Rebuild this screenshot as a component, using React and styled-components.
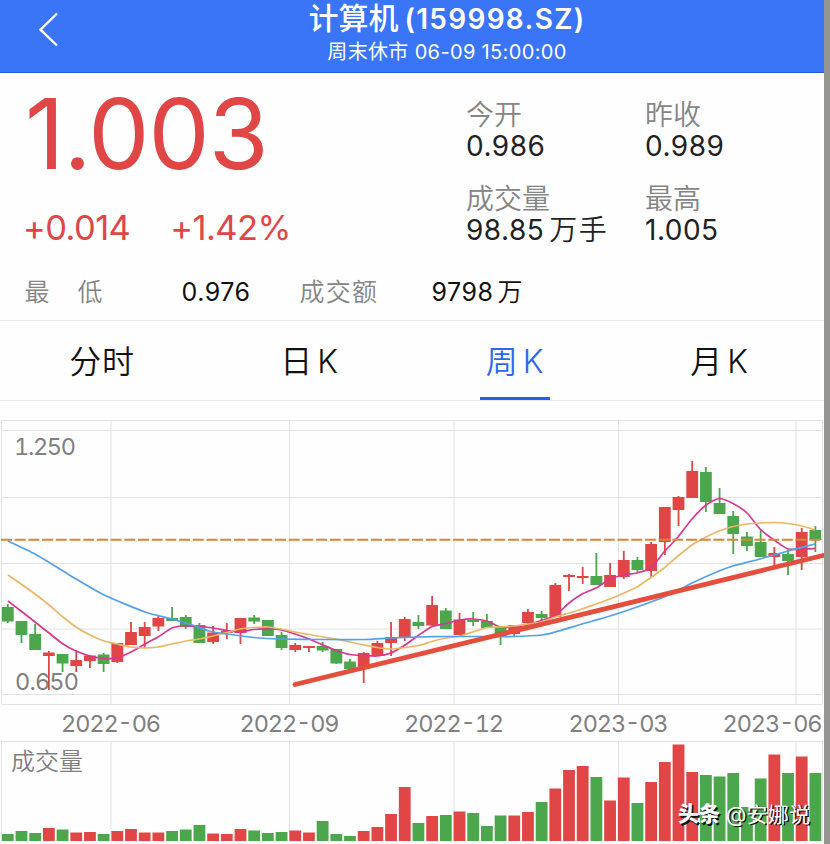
import React from 'react';
import styled, { createGlobalStyle } from 'styled-components';

const GlobalStyle = createGlobalStyle`
  * {
    box-sizing: border-box;
  }

  body {
    margin: 0;
    background: #959591;
    font-family: Inter, 'Noto Sans CJK SC', sans-serif;
    overflow: hidden;
  }
`;

const Screen = styled.div`
  width: 824px;
  height: 844px;
  background: #fefefe;
  overflow: hidden;
  white-space: nowrap;
`;

const Header = styled.header`
  display: grid;
  grid-template-columns: 70px 1fr;
  height: 73px;
  background: #3a74f7;
  border-bottom: 1px solid #2457d8;
  color: #fff;
`;

const BackButton = styled.button`
  display: flex;
  align-items: flex-start;
  padding: 12px 0 0 38px;
  border: none;
  background: none;
`;

const Titles = styled.div`
  display: flex;
  flex-direction: column;
  align-items: center;
  padding-top: 1px;
`;

const Title = styled.h1`
  display: flex;
  gap: 6px;
  margin: 0;
  height: 37px;
  font-size: 28px;
  line-height: 36px;
  font-weight: 600;
  letter-spacing: 1.3px;
`;

const TitleName = styled.span`
  font-size: 30px;
  font-weight: 500;
  line-height: 34px;
  letter-spacing: 0;
`;

const Subtitle = styled.div`
  font-size: 20px;
  line-height: 29px;
  letter-spacing: 0.35px;
`;

const Quote = styled.section`
  display: grid;
  grid-template-columns: 466px 179px 179px;
  grid-template-rows: 191px 57px;
  height: 248px;
  border-bottom: 1px solid #e9e9e9;
`;

const PriceBlock = styled.div`
  padding: 11px 0 0 25px;
  color: #e04646;
`;

const Price = styled.div`
  font-size: 97px;
  line-height: 100px;
  height: 122px;
  letter-spacing: -0.9px;
`;

const Changes = styled.div`
  display: flex;
  gap: 40px;
  margin-left: -2px;
  font-size: 34.5px;
  line-height: 44px;
  font-weight: 400;
  letter-spacing: -0.6px;
`;

const StatColumn = styled.div`
  display: flex;
  flex-direction: column;
  gap: 22px;
  padding-top: 27px;
`;

const Stat = styled.div`
  display: flex;
  flex-direction: column;
  line-height: 31px;
  font-size: 28px;
`;

const StatLabel = styled.span`
  height: 31px;
  color: #858585;
  font-weight: 350;
`;

const StatValue = styled.span`
  height: 31px;
  display: flex;
  gap: 5px;
  color: #222;
  letter-spacing: 0.5px;
`;

const Unit = styled.span`
  font-weight: 350;
  letter-spacing: 1.5px;
`;

const ExtraRow = styled.div`
  grid-column: 1 / -1;
  display: grid;
  grid-template-columns: 157px 118px 132px 1fr;
  padding-left: 24.5px;
  font-size: 25px;
  line-height: 56px;
`;

const ExtraLabel = styled.span`
  color: #858585;
  font-weight: 350;
  word-spacing: ${({ $wide }) => ($wide ? '21px' : '0')};
  letter-spacing: ${({ $wide }) => ($wide ? '0' : '1.2px')};
`;

const ExtraValue = styled.span`
  display: flex;
  gap: 4px;
  color: #111;
  letter-spacing: 0.5px;
`;

const Tabs = styled.nav`
  display: grid;
  grid-template-columns: 204px 211px 200px 209px;
  height: 80px;
  border-bottom: 1px solid #e9e9e9;
`;

const Tab = styled.button`
  display: flex;
  justify-content: center;
  padding: 0;
  border: none;
  background: none;
`;

const TabLabel = styled.span`
  display: flex;
  justify-content: center;
  gap: 4px;
  width: 70px;
  height: 79px;
  border-bottom: 3px solid ${({ $active }) => ($active ? '#1d63e6' : 'transparent')};
  color: ${({ $active }) => ($active ? '#2c69ee' : '#111')};
  font-family: Inter, 'Noto Sans CJK SC', sans-serif;
  font-size: 32px;
  font-weight: 350;
  line-height: 82px;
  letter-spacing: 0.8px;
`;

const Chart = styled.svg`
  display: block;
  font-family: Inter, 'Noto Sans CJK SC', sans-serif;
`;

const AxisLabels = styled.g`
  fill: #808080;
  font-size: 23.5px;
  font-variant-numeric: tabular-nums;
`;

const PaneTitle = styled.text`
  font-size: 24px;
  font-weight: 350;
`;

const RED = '#e04646';
const GREEN = '#4ca64b';
const CHART_TOP = 401;
const STEP = 13.688;
const FIRST_X = 7.8;
const BAR_WIDTH = 11.8;
const VOLUME_BASE = 841;

// [direction, body top, body bottom, wick top, wick bottom, volume top]
const candles = [
  ['g', 607, 621.5, 604, 623, 834],
  ['g', 621, 635, 621, 643, 831],
  ['g', 634, 650, 624, 650, 833],
  ['r', 652.5, 656, 651, 690, 828],
  ['g', 654, 663.5, 654, 672, 829.5],
  ['r', 660, 666, 650, 672, 832.5],
  ['r', 655.5, 661, 655, 668, 832],
  ['g', 654.5, 664, 653, 672, 834],
  ['r', 643, 662, 643, 663, 831],
  ['r', 632, 645, 622, 645, 829],
  ['r', 627, 636, 622, 648, 832.5],
  ['r', 618, 626.5, 616, 631, 832.5],
  ['g', 618, 621, 607, 621, 831],
  ['g', 617, 627, 615, 629, 829.5],
  ['g', 625, 643, 623, 643, 825],
  ['r', 632.5, 642, 626, 644, 833.5],
  ['r', 631, 633, 623, 639, 834],
  ['r', 618, 633, 618, 644, 829],
  ['g', 617.5, 621.5, 615, 624, 830.5],
  ['g', 620, 636, 620, 636, 833],
  ['g', 635, 648, 632, 650, 832],
  ['r', 645, 650, 643, 652, 830.5],
  ['r', 646, 648, 646, 652, 832.5],
  ['g', 646, 650.5, 642, 652, 821],
  ['g', 649, 663.5, 649, 664, 834],
  ['g', 661.5, 669, 659, 669, 836],
  ['r', 653, 669, 652, 683, 831],
  ['r', 643, 656, 641, 656, 827],
  ['r', 637, 643, 622, 656, 814],
  ['r', 619, 637, 617, 641, 787],
  ['g', 622, 626, 615, 629, 823],
  ['r', 605, 625.5, 596, 625.5, 816],
  ['g', 610.5, 629, 608, 629, 815],
  ['r', 619.5, 635, 613, 635, 811.5],
  ['g', 620, 622, 612, 626, 813],
  ['g', 621, 628, 614, 628, 826],
  ['g', 627, 636, 626, 645, 815.5],
  ['r', 625, 634, 625, 636, 815.5],
  ['r', 612, 623, 609, 625, 812],
  ['g', 614, 618, 611, 621, 802],
  ['r', 585, 617, 583, 617, 788.5],
  ['r', 575, 577, 574, 591, 770],
  ['r', 576, 578, 567, 584, 766],
  ['g', 576, 585, 553, 585, 777],
  ['r', 575, 587, 563, 587, 800.5],
  ['r', 560, 577, 551, 579, 777.5],
  ['g', 560, 570, 557, 572, 803],
  ['r', 544, 571, 542, 577, 782],
  ['r', 507, 542, 507, 555, 762],
  ['r', 497, 510, 496, 526, 744.5],
  ['r', 471, 498, 461, 498, 772],
  ['g', 472, 502, 467, 512, 775],
  ['g', 503, 514, 488, 514, 776.5],
  ['g', 516, 534, 511, 554, 773],
  ['g', 536.5, 546, 532, 551, 807],
  ['g', 542, 557, 530, 557, 778.5],
  ['r', 553, 557, 547, 566, 754.5],
  ['g', 554, 561, 550, 575, 773],
  ['r', 532, 557, 528, 570, 756.5],
  ['g', 530, 540, 526, 552, 773],
];

const averages = [
  {
    color: '#d9378f',
    points: [
      [8, 601], [21, 611], [35, 622], [49, 633], [63, 644], [76, 651], [90, 656], [104, 658.5],
      [117, 658], [131, 652], [145, 644], [158, 637], [172, 628], [183, 626], [199, 626.5],
      [213, 628], [227, 630.5], [240, 632], [254, 629.5], [268, 629], [281, 630], [295, 634],
      [309, 639], [323, 645], [336, 650.5], [350, 654.5], [364, 655.5], [377, 656], [391, 653],
      [405, 645], [419, 635], [432, 626.5], [446, 623.5], [460, 620], [473, 619], [487, 621],
      [500, 627], [514, 627], [528, 625], [542, 620], [555, 616], [569, 603], [582, 594],
      [596, 588], [610, 579], [624, 575], [637, 573], [651, 568], [664, 552], [678, 537],
      [692, 519], [706, 505], [719, 498.5], [733, 503.5], [747, 513], [760, 529], [774, 540],
      [788, 549], [802, 549], [815, 548.5],
    ],
  },
  {
    color: '#edb766',
    points: [
      [8, 575], [21, 584], [35, 594], [49, 605], [63, 617], [76, 627], [90, 635], [104, 641],
      [117, 644], [131, 647], [145, 648], [158, 647], [172, 644], [186, 641], [199, 639],
      [213, 636], [227, 632.5], [240, 629], [254, 627.5], [268, 627], [281, 629], [295, 632],
      [309, 634.5], [323, 637], [336, 639], [350, 642], [364, 645], [377, 647.5], [391, 649],
      [405, 647.5], [419, 645.5], [432, 641.5], [446, 638], [460, 636], [473, 632], [487, 627.5],
      [500, 627], [514, 626], [528, 624], [542, 622], [555, 617], [569, 613], [582, 609],
      [596, 604], [610, 599], [624, 593], [637, 587], [651, 577.5], [664, 568], [678, 556],
      [692, 545], [706, 537], [719, 531], [733, 526.5], [747, 524], [760, 523], [774, 522.5],
      [788, 523.5], [802, 526], [815, 530],
    ],
  },
  {
    color: '#51a1ec',
    points: [
      [8, 541], [35, 554], [63, 571], [76, 579], [104, 595], [145, 612], [172, 619],
      [192, 625], [209, 631], [227, 634], [254, 637.5], [281, 639], [323, 639.5], [364, 639.5],
      [391, 638], [419, 637], [446, 636.5], [487, 636.5], [514, 636.5], [542, 635], [555, 632],
      [582, 624], [610, 616], [637, 607], [664, 597], [678, 590.5], [692, 583], [719, 571],
      [733, 566], [760, 559], [788, 551], [815, 544],
    ],
  },
];

const months = [
  { x: 111, label: '2022-06' },
  { x: 289.5, label: '2022-09' },
  { x: 454, label: '2022-12' },
  { x: 618.5, label: '2023-03' },
  { x: 796, label: '2023-06', labelX: 772.5 },
];

const smoothPath = points =>
  points
    .map(([x, y], i) => {
      if (i === 0) return `M${x} ${y}`;
      const before = points[i - 2] || points[i - 1];
      const [px, py] = points[i - 1];
      const after = points[i + 1] || points[i];
      const c1 = [px + (x - before[0]) / 9, py + (y - before[1]) / 9];
      const c2 = [x - (after[0] - px) / 9, y - (after[1] - py) / 9];
      return `C${c1.join(' ')} ${c2.join(' ')} ${x} ${y}`;
    })
    .join('');

function Candle({ data, index }) {
  const [direction, top, bottom, high, low] = data;
  const x = FIRST_X + STEP * index;
  const color = direction === 'r' ? RED : GREEN;

  return (
    <g fill={color}>
      <rect x={x - 0.9} y={high} width="1.8" height={low - high} />
      <rect x={x - BAR_WIDTH / 2} y={top} width={BAR_WIDTH} height={bottom - top} />
    </g>
  );
}

function KLineChart() {
  return (
    <Chart width="824" height="443" viewBox={`0 ${CHART_TOP} 824 443`}>
      <g stroke="#e2e2e2" strokeWidth="1" fill="none">
        <path d="M1.5 704.5V420.5H822.5V704.5Z" />
        {[430.5, 497.5, 563.5, 629, 694.5].map(y => (
          <path key={y} d={`M1 ${y}H823`} />
        ))}
        <path d="M1.5 841V741.5H822.5V841" />
        {months.map(({ x }) => (
          <path key={x} d={`M${x} 421V704M${x} 742V841`} />
        ))}
      </g>

      {candles.map((data, i) => (
        <Candle key={i} data={data} index={i} />
      ))}

      {averages.map(({ color, points }) => (
        <path key={color} d={smoothPath(points)} fill="none" stroke={color} strokeWidth="1.7" />
      ))}
      <path d="M1 539.8H823" stroke="#da8436" strokeWidth="2" strokeDasharray="11 2.7" />
      <path d="M295 684.5L823 555.5" stroke="#e54e3c" strokeWidth="4.8" strokeLinecap="round" />

      <AxisLabels>
        <text x="14" y="454.5" textLength="62">1.250</text>
        <text x="15" y="689.5" textLength="64">0.650</text>
        {months.map(({ x, label, labelX }) => (
          <text key={label} x={(labelX || x) - 50} y="731.5" textLength="100">{label}</text>
        ))}
        <PaneTitle x="11" y="769.5">成交量</PaneTitle>
      </AxisLabels>

      {candles.map(([direction, , , , , volume], i) => (
        <rect
          key={i}
          x={FIRST_X + STEP * i - BAR_WIDTH / 2}
          y={volume}
          width={BAR_WIDTH}
          height={VOLUME_BASE - volume}
          fill={direction === 'r' ? RED : GREEN}
        />
      ))}

      <g fontSize="21">
        <g fill="#111" transform="translate(1.5 1.5)">
          <text x="678" y="821" fontWeight="900">头条</text>
          <text x="726" y="821.5" textLength="84">@安娜说</text>
        </g>
        <g fill="#fff">
          <text x="678" y="821" fontWeight="900">头条</text>
          <text x="726" y="821.5" textLength="84">@安娜说</text>
        </g>
      </g>
    </Chart>
  );
}

const stats = [
  [
    { label: '今开', value: '0.986' },
    { label: '成交量', value: '98.85', unit: '万手' },
  ],
  [
    { label: '昨收', value: '0.989' },
    { label: '最高', value: '1.005' },
  ],
];

const tabs = [
  { id: 'minute', name: '分时' },
  { id: 'day', name: '日', suffix: 'K' },
  { id: 'week', name: '周', suffix: 'K' },
  { id: 'month', name: '月', suffix: 'K' },
];

function App() {
  const [activeTab, setActiveTab] = React.useState('week');

  return (
    <>
      <GlobalStyle />
      <Screen>
        <Header>
          <BackButton aria-label="返回">
            <svg width="22" height="36" viewBox="0 0 22 36" fill="none">
              <path d="M19 1.5L2.5 17.7L19 33.5" stroke="#fff" strokeWidth="2.4" />
            </svg>
          </BackButton>
          <Titles>
            <Title>
              <TitleName>计算机</TitleName>
              (159998.SZ)
            </Title>
            <Subtitle>周末休市 06-09 15:00:00</Subtitle>
          </Titles>
        </Header>

        <Quote>
          <PriceBlock>
            <Price>1.003</Price>
            <Changes>
              <span>+0.014</span>
              <span>+1.42%</span>
            </Changes>
          </PriceBlock>
          {stats.map((column, i) => (
            <StatColumn key={i}>
              {column.map(({ label, value, unit }) => (
                <Stat key={label}>
                  <StatLabel>{label}</StatLabel>
                  <StatValue>
                    {value}
                    {unit && <Unit>{unit}</Unit>}
                  </StatValue>
                </Stat>
              ))}
            </StatColumn>
          ))}
          <ExtraRow>
            <ExtraLabel $wide>最 低</ExtraLabel>
            <ExtraValue>0.976</ExtraValue>
            <ExtraLabel>成交额</ExtraLabel>
            <ExtraValue>
              9798<Unit>万</Unit>
            </ExtraValue>
          </ExtraRow>
        </Quote>

        <Tabs>
          {tabs.map(({ id, name, suffix }) => (
            <Tab key={id} onClick={() => setActiveTab(id)}>
              <TabLabel $active={id === activeTab}>
                <span>{name}</span>
                {suffix && <span>{suffix}</span>}
              </TabLabel>
            </Tab>
          ))}
        </Tabs>

        <KLineChart />
      </Screen>
    </>
  );
}

export default App;
